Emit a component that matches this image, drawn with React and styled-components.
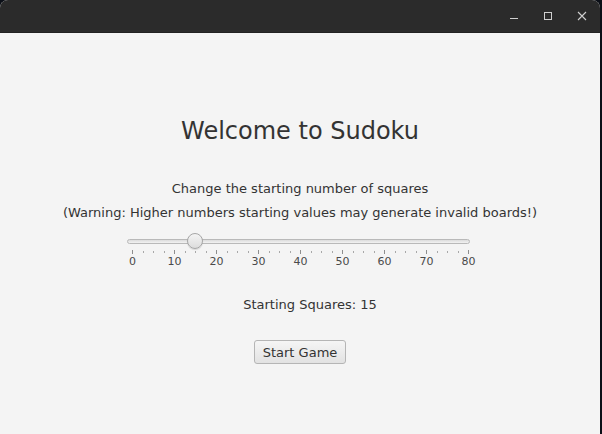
import React, { useState } from "react";
import styled, { createGlobalStyle } from "styled-components";

const GlobalStyle = createGlobalStyle`
  html, body {
    margin: 0;
    padding: 0;
    background: #0b0f17;
  }
  body {
    font-family: "DejaVu Sans", "Liberation Sans", sans-serif;
  }
`;

const Screen = styled.div`
  width: 602px;
  height: 434px;
  display: flex;
  overflow: hidden;
`;

const Window = styled.div`
  width: 600px;
  height: 434px;
  display: flex;
  flex-direction: column;
  border-radius: 8px 8px 0 0;
  overflow: hidden;
  background: #f4f4f4;
`;

const TitleBar = styled.div`
  height: 33px;
  flex: none;
  background: #2b2b2b;
  display: flex;
  justify-content: flex-end;
  padding-right: 1px;
  border-bottom: 1px solid #232323;
  box-sizing: border-box;
`;

const WinButton = styled.div`
  width: 34px;
  height: 32px;
  display: flex;
  align-items: center;
  justify-content: center;
  color: #cfcfcf;
`;

const Content = styled.div`
  flex: 1;
  display: flex;
  flex-direction: column;
  align-items: center;
  padding-top: 83px;
  color: #333;
`;

const Heading = styled.h1`
  margin: 0;
  font-size: 24px;
  font-weight: normal;
  line-height: 30px;
  color: #333;
`;

const Line = styled.p`
  margin: 0;
  font-size: 13px;
  line-height: 24px;
  margin-top: ${(p) => p.$top || 0}px;
`;

const SliderBox = styled.div`
  width: 343px;
  margin-top: 7px;
  display: flex;
  flex-direction: column;
  margin-left: -3px;
`;

const TrackRow = styled.div`
  position: relative;
  height: 18px;
  display: flex;
  align-items: center;
`;

const Track = styled.div`
  width: 100%;
  height: 5px;
  box-sizing: border-box;
  border: 1px solid #b9b9b9;
  border-radius: 3px;
  background: linear-gradient(#dcdcdc, #f2f2f2);
`;

const Thumb = styled.div`
  position: absolute;
  top: 1px;
  width: 16px;
  height: 16px;
  margin-left: -8px;
  box-sizing: border-box;
  border-radius: 50%;
  border: 1px solid #a6a6a6;
  background: linear-gradient(#f4f4f4, #dcdcdc);
  box-shadow: 0 1px 1px rgba(0, 0, 0, 0.12);
`;

const Ticks = styled.div`
  margin: 0 1px 0 5px;
  height: 6px;
  display: flex;
  justify-content: space-between;
  align-items: flex-start;
`;

const Tick = styled.div`
  width: 1px;
  height: ${(p) => (p.$major ? 4 : 2)}px;
  margin-top: ${(p) => (p.$major ? 0 : 1)}px;
  background: ${(p) => (p.$major ? "#8e8e8e" : "#a8a8a8")};
`;

const Labels = styled.div`
  margin: -1px 1px 0 5px;
  display: flex;
  justify-content: space-between;
`;

const Label = styled.div`
  width: 1px;
  display: flex;
  justify-content: center;
  font-size: 11px;
  line-height: 14px;
  color: #4a4a4a;
  white-space: nowrap;
`;

const Count = styled.p`
  margin: 26px 0 0 20px;
  font-size: 13px;
  line-height: 20px;
`;

const Button = styled.button`
  margin-top: 25px;
  height: 24px;
  padding: 0 8px;
  font-family: "DejaVu Sans", "Liberation Sans", sans-serif;
  font-size: 13px;
  color: #333;
  border: 1px solid #b5b5b5;
  border-radius: 3px;
  background: linear-gradient(#f5f5f5, #e2e2e2);
  cursor: pointer;
`;

const MIN = 0;
const MAX = 80;

export default function App() {
  const [value] = useState(15);
  const ticks = [];
  for (let i = 0; i <= 32; i++) ticks.push(i % 4 === 0);
  const labels = [];
  for (let v = MIN; v <= MAX; v += 10) labels.push(v);
  // thumb travels between the first and last tick
  const thumbLeft = 5 + ((value - MIN) / (MAX - MIN)) * 337;

  return (
    <>
      <GlobalStyle />
      <Screen>
        <Window>
          <TitleBar>
            <WinButton>
              <svg width="10" height="10" viewBox="0 0 10 10">
                <line x1="1" y1="7.5" x2="9" y2="7.5" stroke="currentColor" strokeWidth="1" />
              </svg>
            </WinButton>
            <WinButton>
              <svg width="10" height="10" viewBox="0 0 10 10">
                <rect x="1.5" y="1.5" width="7" height="7" fill="none" stroke="currentColor" strokeWidth="1" />
              </svg>
            </WinButton>
            <WinButton>
              <svg width="10" height="10" viewBox="0 0 10 10">
                <path d="M1 1 L9 9 M9 1 L1 9" stroke="currentColor" strokeWidth="1.1" />
              </svg>
            </WinButton>
          </TitleBar>
          <Content>
            <Heading>Welcome to Sudoku</Heading>
            <Line $top={31}>Change the starting number of squares</Line>
            <Line>(Warning: Higher numbers starting values may generate invalid boards!)</Line>
            <SliderBox>
              <TrackRow>
                <Track />
                <Thumb style={{ left: thumbLeft }} />
              </TrackRow>
              <Ticks>
                {ticks.map((major, i) => (
                  <Tick key={i} $major={major} />
                ))}
              </Ticks>
              <Labels>
                {labels.map((v) => (
                  <Label key={v}>{v}</Label>
                ))}
              </Labels>
            </SliderBox>
            <Count>Starting Squares: {value}</Count>
            <Button>Start Game</Button>
          </Content>
        </Window>
      </Screen>
    </>
  );
}
